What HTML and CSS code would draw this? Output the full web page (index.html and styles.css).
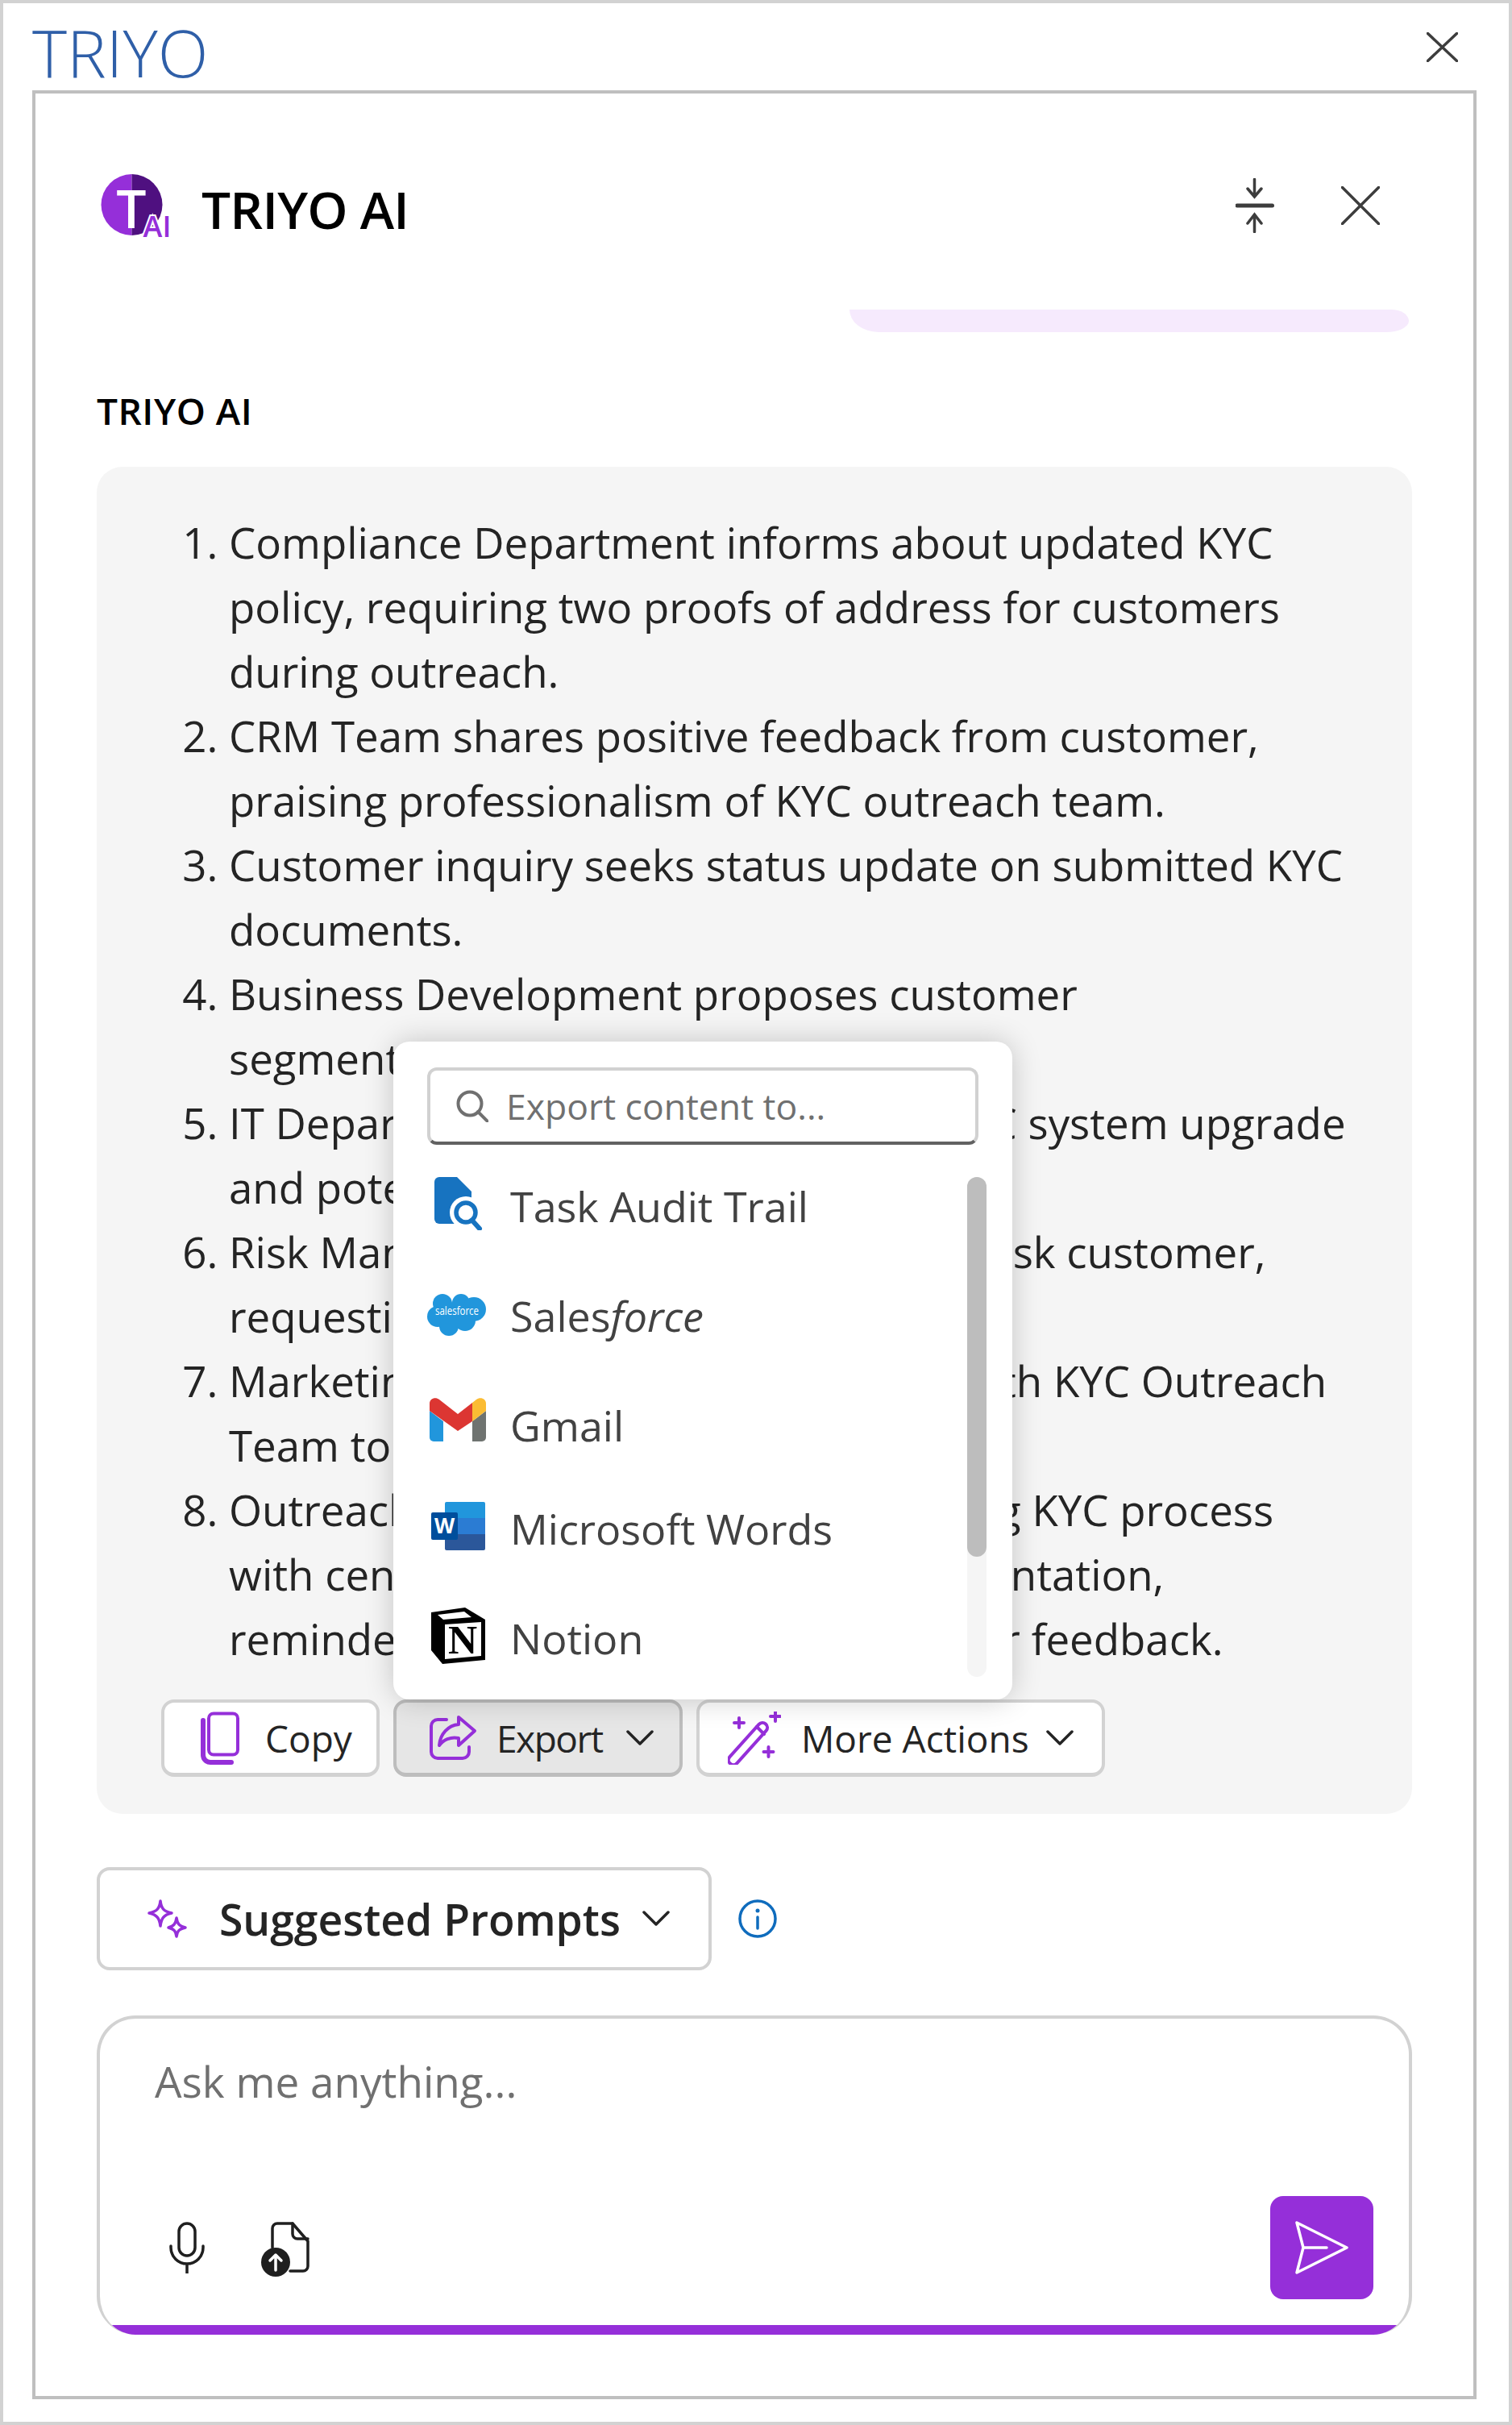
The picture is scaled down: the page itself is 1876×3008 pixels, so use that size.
FILE: index.html
```html
<!DOCTYPE html>
<html lang="en">
<head>
    <meta charset="UTF-8">
    <meta name="viewport" content="width=device-width, initial-scale=1.0">
    <title>TRIYO AI</title>
    <link rel="stylesheet" href="styles.css">
</head>
<body>
    <div class="app-window">
        <div class="title-bar">
            <div class="app-title">TRIYO</div>
            <svg class="window-close" width="39" height="37" viewBox="0 0 39 37"><path d="M1.5 1.5 37.5 35.5M37.5 1.5 1.5 35.5"/></svg>
        </div>

        <div class="frame">
            <!-- Panel header -->
            <div class="panel-head">
                <svg class="panel-logo" width="88" height="82" viewBox="0 0 88 82">
                    <path d="M38.5 2a38 38 0 0 0 0 76z" fill="#952fd9"/>
                    <path d="M38.5 2a38 38 0 0 1 0 76z" fill="#4f1080"/>
                    <text x="38" y="69" class="logo-t">T</text>
                    <text x="70" y="80" class="logo-ai">AI</text>
                </svg>
                <h1 class="panel-title">TRIYO AI</h1>
                <svg class="collapse-icon" width="48" height="68" viewBox="0 0 48 68">
                    <path d="M23.5 1.500V22M15 13 23.500 23 32 13M23.500 46V66.500M15 56 23.500 45 32 56"/>
                    <path class="thick" d="M2 34H45.500"/>
                </svg>
                <svg class="panel-close" width="48" height="48" viewBox="0 0 48 48"><path d="M1.500 1.500 46.500 46.500M46.500 1.500 1.500 46.500"/></svg>
            </div>

            <div class="user-bubble"></div>
            <div class="sender-label">TRIYO AI</div>

            <!-- Answer card -->
            <div class="answer-card">
                <ol class="answer-list">
                    <li>Compliance Department informs about updated KYC<br>policy, requiring two proofs of address for customers<br>during outreach.</li>
                    <li>CRM Team shares positive feedback from customer,<br>praising professionalism of KYC outreach team.</li>
                    <li>Customer inquiry seeks status update on submitted KYC<br>documents.</li>
                    <li>Business Development proposes customer<br>segmentation for tailored outreach.</li>
                    <li>IT Department informs about latest KYC system upgrade<br>and potential downtime.</li>
                    <li>Risk Management alerts another high-risk customer,<br>requesting further review.</li>
                    <li>Marketing Team plans to coordinate with KYC Outreach<br>Team to improve messaging.</li>
                    <li>Outreach Team recommends improving KYC process<br>with centralized KYC reporting, documentation,<br>reminders, and more periodic customer feedback.</li>
                </ol>

                <div class="action-buttons">
                    <button class="action-btn copy-btn">
                        <svg width="48" height="66" viewBox="0 0 48 66">
                            <rect x="10" y="2.500" width="36" height="51" rx="6"/>
                            <path class="thick" d="M3 11V54a9 9 0 0 0 9 9H38"/>
                        </svg>
                        <span>Copy</span>
                    </button>
                    <button class="action-btn export-btn">
                        <svg width="60" height="58" viewBox="0 0 60 58">
                            <path d="M22 6H11a8 8 0 0 0-8 8V46a8 8 0 0 0 8 8H42a8 8 0 0 0 8-8V40"/>
                            <path d="M37 3 57 20 37 38V29C27 27 18 31 13 38 14 24 24 13 37 12z"/>
                        </svg>
                        <span>Export</span>
                        <svg class="chevron" width="34" height="20" viewBox="0 0 34 20"><path d="M2 2 17 17 32 2"/></svg>
                    </button>
                    <button class="action-btn more-btn">
                        <svg width="66" height="66" viewBox="0 0 66 66">
                            <rect x="-6" y="-33" width="12" height="66" rx="6" transform="translate(25 40) rotate(42)"/>
                            <path d="M36 19 45 28M14 8V20M8 14H20M59 0V12M53 6H65M50.500 44V56M44.500 50H56.500"/>
                        </svg>
                        <span>More Actions</span>
                        <svg class="chevron" width="34" height="20" viewBox="0 0 34 20"><path d="M2 2 17 17 32 2"/></svg>
                    </button>
                </div>

                <!-- Export dropdown -->
                <div class="export-menu">
                    <div class="export-search">
                        <svg width="40" height="40" viewBox="0 0 40 40"><circle cx="17" cy="17" r="14.500"/><path d="M27 27 39 39"/></svg>
                        <span>Export content to...</span>
                    </div>
                    <div class="export-list">
                        <div class="export-item">
                            <svg class="task-icon" width="60" height="66" viewBox="0 0 60 66">
                                <path d="M6 0H28L46 18V58H6a6 6 0 0 1-6-6V6a6 6 0 0 1 6-6z" fill="#1773c0"/>
                                <circle cx="39" cy="44" r="20" fill="#fff"/>
                                <circle cx="39" cy="44" r="12" fill="#fff" stroke="#1773c0" stroke-width="5.500"/>
                                <path d="M47 54 56 64" stroke="#1773c0" stroke-width="6" stroke-linecap="round"/>
                            </svg>
                            <span>Task Audit Trail</span>
                        </div>
                        <div class="export-item">
                            <svg class="salesforce-icon" width="74" height="54" viewBox="0 0 74 54">
                                <g fill="#2196dc">
                                    <circle cx="19" cy="13" r="12"/>
                                    <circle cx="42" cy="12" r="11"/>
                                    <circle cx="58" cy="20" r="15"/>
                                    <circle cx="13" cy="29" r="13"/>
                                    <circle cx="27" cy="41" r="12"/>
                                    <circle cx="47" cy="34" r="13"/>
                                    <rect x="14" y="12" width="42" height="24"/>
                                </g>
                                <text x="37" y="27" class="salesforce-mark" textLength="54" lengthAdjust="spacingAndGlyphs">salesforce</text>
                            </svg>
                            <span>Sales<i>force</i></span>
                        </div>
                        <div class="export-item">
                            <svg class="gmail-icon" width="70" height="54" viewBox="0 0 70 54">
                                <path d="M0 16 17 29V54H5a5 5 0 0 1-5-5z" fill="#2196dc"/>
                                <path d="M53 29 70 16V49a5 5 0 0 1-5 5H53z" fill="#6f7370"/>
                                <path d="M0 7C0 1 7-2 12 2L35 20 53 6V29L35 41 0 16z" fill="#dc3632"/>
                                <path d="M53 6 58 2C63-2 70 1 70 7V16L53 29z" fill="#fbbc33"/>
                            </svg>
                            <span>Gmail</span>
                        </div>
                        <div class="export-item word-item">
                            <svg class="word-icon" width="67" height="60" viewBox="0 0 67 60">
                                <path d="M19 0H65a2 2 0 0 1 2 2V20H17V2a2 2 0 0 1 2-2z" fill="#2196dc"/>
                                <rect x="17" y="20" width="50" height="20" fill="#2b7cd3"/>
                                <path d="M17 40H67V58a2 2 0 0 1-2 2H19a2 2 0 0 1-2-2z" fill="#2b579a"/>
                                <rect x="0" y="13" width="33" height="34" rx="2" fill="#004e9c"/>
                                <text x="16.500" y="39" class="word-mark">W</text>
                            </svg>
                            <span>Microsoft Words</span>
                        </div>
                        <div class="export-item">
                            <svg class="notion-icon" width="67" height="70" viewBox="0 0 67 70">
                                <path d="M0 6 42 0 67 15V65L14 70 0 53z" fill="#000"/>
                                <path d="M8 9 41 5 50 12 15 15z" fill="#fff"/>
                                <path d="M17 21 62 18V60L17 64z" fill="#fff"/>
                                <text x="39" y="57" class="notion-mark">N</text>
                            </svg>
                            <span>Notion</span>
                        </div>
                    </div>
                    <div class="export-scrollbar"><div class="export-thumb"></div></div>
                </div>
            </div>

            <!-- Suggested prompts -->
            <div class="prompt-row">
                <button class="prompt-btn">
                    <svg width="50" height="48" viewBox="0 0 50 48">
                        <path d="M16 2C17 11 20 15 30 17 20 19 17 24 16 33 15 24 12 19 2 17 12 15 15 11 16 2z"/>
                        <path d="M36 23C37 30 39 33 47 35 39 37 37 39 36 46 35 39 33 37 26 35 33 33 35 30 36 23z"/>
                    </svg>
                    <span>Suggested Prompts</span>
                    <svg class="chevron" width="34" height="20" viewBox="0 0 34 20"><path d="M2 2 17 17 32 2"/></svg>
                </button>
                <svg class="info-icon" width="48" height="48" viewBox="0 0 48 48">
                    <circle cx="24" cy="24" r="22"/>
                    <path d="M24 22V36"/>
                    <circle class="info-dot" cx="24" cy="14" r="2.500"/>
                </svg>
            </div>

            <!-- Composer -->
            <div class="composer">
                <div class="composer-placeholder">Ask me anything...</div>
                <div class="composer-tools">
                    <svg class="mic-icon" width="44" height="64" viewBox="0 0 44 64">
                        <rect x="12" y="2" width="20" height="40" rx="10"/>
                        <path d="M2 30V32a20 20 0 0 0 40 0V30M22 52V64"/>
                    </svg>
                    <svg class="file-icon" width="60" height="68" viewBox="0 0 60 68">
                        <path d="M14 32V8a6 6 0 0 1 6-6H39L58 24V55a6 6 0 0 1-6 6H36"/>
                        <path d="M39 2V15a6 6 0 0 0 6 6H58"/>
                        <circle class="file-badge" cx="18" cy="50" r="18"/>
                        <path class="file-arrow" d="M18 60V41M11 48 18 41 25 48"/>
                    </svg>
                    <button class="send-btn">
                        <svg width="66" height="66" viewBox="0 0 66 66"><path d="M2 2 64 33 2 64 10 33zM10 33H39"/></svg>
                    </button>
                </div>
            </div>
        </div>
    </div>
</body>
</html>
```

FILE: styles.css
```css
* {
    margin: 0;
    padding: 0;
    box-sizing: border-box;
}
body {
    background-color: #fff;
    font-family: "Open Sans", "Noto Sans", sans-serif;
    color: #242424;
}
svg {
    display: block;
    flex: none;
    fill: none;
}
button {
    font-family: inherit;
    color: inherit;
    background: #fff;
    cursor: pointer;
    white-space: nowrap;
}
.app-window {
    width: 1876px;
    height: 3008px;
    border: 4px solid #d2d2d2;
    padding: 0 36px;
}
.title-bar {
    height: 108px;
    display: flex;
    justify-content: space-between;
    align-items: flex-start;
}
.app-title {
    margin-top: 6px;
    font-size: 82px;
    line-height: 108px;
    font-weight: 300;
    color: #2f5fa8;
}
.window-close {
    margin-top: 36px;
    margin-right: 27px;
}
.window-close path, .panel-close path, .collapse-icon path {
    stroke: #3d3d3d;
    stroke-width: 3.5;
    stroke-linecap: round;
}
.collapse-icon .thick {
    stroke-width: 5;
}
.frame {
    width: 1792px;
    height: 2864px;
    border: 4px solid #bfbfbf;
    padding: 0 76px;
}
.panel-head {
    height: 268px;
    padding-top: 10px;
    display: flex;
    align-items: center;
    margin-left: 5px;
}
.panel-logo {
    margin-right: 37px;
}
.logo-t {
    font-size: 66px;
    font-weight: 600;
    fill: #fff;
    text-anchor: middle;
}
.logo-ai {
    font-size: 36px;
    font-weight: 600;
    fill: #952fd9;
    stroke: #fff;
    stroke-width: 4px;
    paint-order: stroke;
    text-anchor: middle;
}
.panel-title {
    flex: 1;
    margin-top: 8px;
    font-size: 64px;
    font-weight: 600;
    color: #000;
    letter-spacing: -0.8px;
}
.collapse-icon {
    margin-right: 83px;
}
.panel-close {
    margin-right: 40px;
}
.user-bubble {
    width: 694px;
    height: 28px;
    margin-left: 934px;
    background-color: #f6eafd;
    border-radius: 0 22px 28px 36px / 0 14px 14px 28px;
}
.sender-label {
    margin-top: 65px;
    height: 64px;
    line-height: 64px;
    font-size: 46px;
    font-weight: 600;
    color: #000;
    letter-spacing: 0.5px;
}
.answer-card {
    position: relative;
    margin-top: 38px;
    height: 1671px;
    background-color: #f5f5f5;
    border-radius: 32px;
    padding: 54px 0 0 80px;
}
.answer-list {
    padding-left: 84px;
    font-size: 52.8px;
    line-height: 80px;
    white-space: nowrap;
}
.action-buttons {
    display: flex;
    gap: 17px;
    margin-top: 35px;
}
.action-btn {
    height: 96px;
    border: 4px solid #d2d2d2;
    border-bottom-width: 5px;
    border-radius: 16px;
    display: flex;
    align-items: center;
    font-size: 46px;
    padding: 0 32px 0 45px;
}
.action-btn svg path, .action-btn svg rect {
    stroke: #952fd9;
    stroke-width: 4;
    stroke-linecap: round;
    stroke-linejoin: round;
}
.action-btn .thick {
    stroke-width: 6;
}
.action-btn .chevron path, .prompt-btn .chevron path {
    stroke: #242424;
    stroke-width: 3.5;
    stroke-linecap: round;
    stroke-linejoin: round;
}
.chevron {
    margin-left: auto;
}
.copy-btn {
    width: 271px;
    gap: 32px;
}
.export-btn {
    width: 359px;
    padding-left: 40px;
    gap: 24px;
    background-color: #e6e6e6;
    border-color: #bdbdbd;
}
.export-btn span {
    letter-spacing: -1.5px;
}
.more-btn {
    width: 507px;
    padding-left: 35px;
    gap: 25px;
}
.more-btn .chevron {
    margin-left: -4px;
}
.export-menu {
    position: absolute;
    left: 368px;
    top: 713px;
    width: 768px;
    height: 816px;
    background-color: #fff;
    border-radius: 20px;
    box-shadow: 0 0 36px rgba(0, 0, 0, 0.2);
}
.export-search {
    position: absolute;
    left: 42px;
    top: 32px;
    width: 684px;
    height: 96px;
    border: 4px solid #d1d1d1;
    border-bottom-color: #616161;
    border-radius: 12px;
    display: flex;
    align-items: center;
    gap: 22px;
    padding-left: 32px;
    font-size: 44.5px;
    color: #707070;
}
.export-search span {
    margin-top: -2px;
}
.export-search svg circle, .export-search svg path {
    stroke: #707070;
    stroke-width: 4;
    stroke-linecap: round;
}
.export-list {
    position: absolute;
    left: 0;
    top: 135px;
    width: 700px;
}
.export-item {
    height: 136px;
    display: flex;
    align-items: center;
    font-size: 52px;
    color: #424242;
    position: relative;
    padding-left: 145px;
}
.export-item i {
    font-style: italic;
}
.word-item {
    margin-top: -8px;
}
.export-item svg {
    position: absolute;
}
.task-icon {
    left: 51px;
    top: 33px;
}
.salesforce-icon {
    left: 42px;
    top: 41px;
}
.gmail-icon {
    left: 45px;
    top: 35px;
}
.word-icon {
    left: 47px;
    top: 36px;
}
.notion-icon {
    left: 47px;
    top: 31px;
}
.salesforce-mark {
    font-size: 14px;
    fill: #fff;
    text-anchor: middle;
}
.word-mark {
    font-size: 26px;
    font-weight: 700;
    fill: #fff;
    text-anchor: middle;
}
.notion-mark {
    font-family: "Liberation Serif", serif;
    font-size: 50px;
    font-weight: 700;
    fill: #000;
    text-anchor: middle;
}
.export-scrollbar {
    position: absolute;
    left: 712px;
    top: 168px;
    width: 24px;
    height: 620px;
    border-radius: 12px;
    background-color: #f5f5f5;
}
.export-thumb {
    height: 471px;
    border-radius: 12px;
    background-color: #bdbdbd;
}
.prompt-row {
    display: flex;
    align-items: center;
    margin-top: 66px;
    gap: 32px;
}
.prompt-btn {
    width: 763px;
    height: 128px;
    border: 4px solid #d2d2d2;
    border-radius: 16px;
    display: flex;
    align-items: center;
    padding: 0 49px 0 59px;
    gap: 39px;
    font-size: 53.4px;
    font-weight: 600;
}
.prompt-btn svg path {
    stroke: #952fd9;
    stroke-width: 3.5;
    stroke-linejoin: round;
}
.prompt-btn .chevron {
    margin-left: -12px;
}
.info-icon {
    margin-left: 1px;
}
.info-icon circle, .info-icon path {
    stroke: #0f6cbd;
    stroke-width: 3.5;
    stroke-linecap: round;
}
.info-icon .info-dot {
    fill: #0f6cbd;
    stroke: none;
}
.composer {
    margin-top: 56px;
    height: 396px;
    border: 4px solid #d2d2d2;
    border-bottom: none;
    border-radius: 48px;
    padding: 0 44px 0 68px;
    position: relative;
    overflow: hidden;
}
.composer::after {
    content: "";
    position: absolute;
    left: 0;
    right: 0;
    bottom: 0;
    height: 12px;
    background-color: #952fd9;
}
.composer-placeholder {
    margin-top: 38px;
    font-size: 53px;
    line-height: 80px;
    color: #707070;
}
.composer-tools {
    margin-top: 102px;
    display: flex;
    align-items: flex-start;
}
.mic-icon {
    margin-left: 18px;
    margin-top: 32px;
    margin-right: 70px;
}
.file-icon {
    margin-top: 32px;
}
.mic-icon rect, .mic-icon path, .file-icon path {
    stroke: #1f1f1f;
    stroke-width: 3.5;
    stroke-linecap: round;
    stroke-linejoin: round;
}
.file-badge {
    fill: #1f1f1f;
}
.file-icon .file-arrow {
    stroke: #fff;
}
.send-btn {
    margin-left: auto;
    width: 128px;
    height: 128px;
    border: none;
    border-radius: 16px;
    background-color: #952fd9;
    display: flex;
    align-items: center;
    justify-content: center;
}
.send-btn svg path {
    stroke: #fff;
    stroke-width: 3.5;
    stroke-linejoin: round;
    stroke-linecap: round;
}
```
